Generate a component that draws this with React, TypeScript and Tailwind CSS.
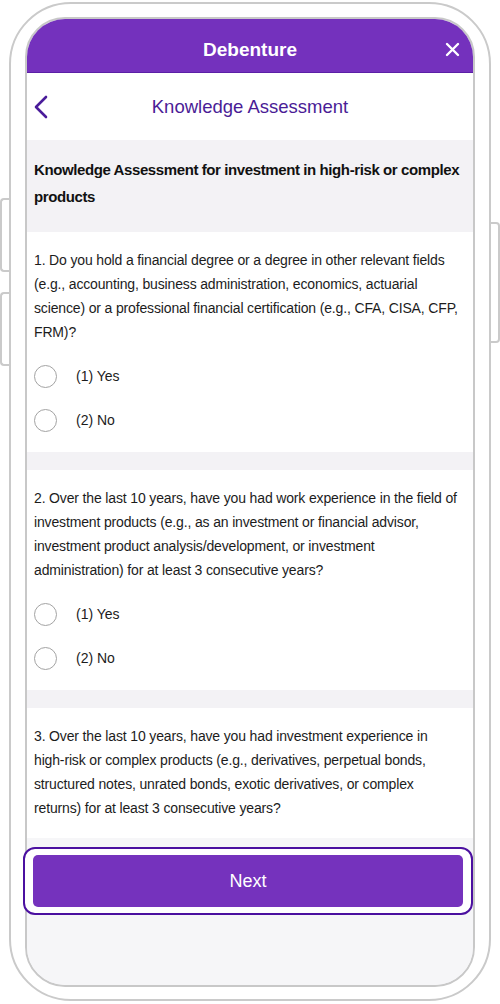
import React from "react";

const Radio = ({ label }: { label: string }) => (
  <div className="flex h-[44px] items-center">
    <div className="h-[23px] w-[23px] rounded-full border-[1.5px] border-[#a3a3a3] bg-white" />
    <span className="ml-[19px] text-[14px] text-[#1c1c1c]">{label}</span>
  </div>
);

const Question = ({ children }: { children: React.ReactNode }) => (
  <div className="bg-white px-[7px] pt-4 pb-[10px]">
    <p className="text-[14px] leading-[24px] tracking-[-0.15px] text-[#1c1c1c]">{children}</p>
    <div className="mt-[10px]">
      <Radio label="(1) Yes" />
      <Radio label="(2) No" />
    </div>
  </div>
);

export default function App() {
  return (
    <div
      className="relative h-[1004px] w-[500px] overflow-hidden bg-white"
      style={{ fontFamily: "'Liberation Sans', Arial, sans-serif" }}
    >
      {/* side buttons */}
      <div className="absolute left-0 top-[198px] h-[74px] w-[12px] rounded-l-[4px] border-2 border-r-0 border-[#cacaca] bg-white" />
      <div className="absolute left-0 top-[292px] h-[74px] w-[12px] rounded-l-[4px] border-2 border-r-0 border-[#cacaca] bg-white" />
      <div className="absolute right-0 top-[222px] h-[121px] w-[12px] rounded-r-[4px] border-2 border-l-0 border-[#cacaca] bg-white" />

      <div className="relative mx-[9px] mt-[2px] h-[999px] rounded-[62px] border-2 border-[#cacaca] bg-white px-[14px] pt-[13px] pb-[12px]">
        <div className="flex h-[970px] flex-col rounded-[40px] border-2 border-[#c8c8c8] bg-[#f6f6f8]">
          {/* header */}
          <div className="relative flex h-[54px] shrink-0 items-center justify-center rounded-t-[38px] border-b border-[#5b1fa6] bg-[#7431bd] pt-[10px]">
            <span className="text-[19px] font-bold text-white">Debenture</span>
            <svg
              className="absolute right-[13px] top-[23px]"
              width="15"
              height="15"
              viewBox="0 0 15 15"
              fill="none"
              stroke="white"
              strokeWidth="2.4"
              strokeLinecap="round"
            >
              <path d="M2 2 L13 13 M13 2 L2 13" />
            </svg>
          </div>
          {/* sub header */}
          <div className="relative flex h-[67px] shrink-0 items-center justify-center bg-white">
            <svg
              className="absolute left-[6px] top-[22px]"
              width="16"
              height="24"
              viewBox="0 0 16 24"
              fill="none"
              stroke="#4a1c9a"
              strokeWidth="2.6"
              strokeLinecap="round"
              strokeLinejoin="round"
            >
              <path d="M13 2 L3 12 L13 22" />
            </svg>
            <span className="text-[18.5px] text-[#4a1c96]">Knowledge Assessment</span>
          </div>
          {/* content */}
          <div className="flex-1 overflow-hidden bg-[#f3f2f5]">
            <div className="px-[7px] pt-[16px] pb-[22px]">
              <p className="text-[15px] font-bold leading-[27px] tracking-[-0.4px] text-[#111]">
                Knowledge Assessment for investment in high-risk or complex products
              </p>
            </div>
            <Question>
              1. Do you hold a financial degree or a degree in other relevant fields (e.g., accounting, business administration, economics, actuarial science) or a professional financial certification (e.g., CFA, CISA, CFP, FRM)?
            </Question>
            <div className="h-[18px]" />
            <Question>
              2. Over the last 10 years, have you had work experience in the field of investment products (e.g., as an investment or financial advisor, investment product analysis/development, or investment administration) for at least 3 consecutive years?
            </Question>
            <div className="h-[18px]" />
            <Question>
              3. Over the last 10 years, have you had investment experience in{" "}
              <span className="whitespace-nowrap">high-risk</span> or complex products (e.g., derivatives, perpetual bonds, structured notes, unrated bonds, exotic derivatives, or complex
              <br />
              returns) for at least 3 consecutive years?
            </Question>
          </div>
          {/* bottom */}
          <div className="h-[147px] shrink-0 rounded-b-[38px] bg-[#f6f6f8] pt-[9px]">
            <div className="ml-[-4px] rounded-[12px] border-2 border-[#4b10a0] bg-white px-[8px] py-[6px]">
              <div className="flex h-[52px] items-center justify-center rounded-[5px] bg-[#7532bd]">
                <span className="text-[18px] text-white">Next</span>
              </div>
            </div>
          </div>
        </div>
      </div>
    </div>
  );
}
